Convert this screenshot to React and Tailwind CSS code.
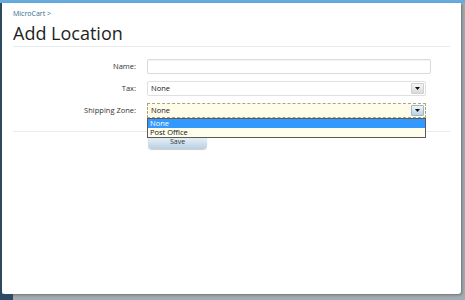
const font = { fontFamily: '"Open Sans", "Noto Sans", sans-serif' };

function Arrow({ active }) {
  return (
    <span
      className={`flex h-[11px] w-[13px] items-center justify-center rounded-[1px] border ${
        active
          ? "border-[#9fb6c8] bg-gradient-to-b from-[#eef5fb] to-[#bcd2e4]"
          : "border-[#cfcfcf] bg-gradient-to-b from-[#f6f6f6] to-[#dadada]"
      }`}
    >
      <svg width="5" height="3" viewBox="0 0 5 3">
        <path d="M0 0h5L2.5 3z" fill="#111" />
      </svg>
    </span>
  );
}

function Row({ label, children }) {
  return (
    <div className="mb-[7px] flex h-[15px] items-center">
      <label className="w-[124px] pr-[1px] text-right text-[7.5px] text-[#333]">
        {label}
      </label>
      <div className="relative ml-[10px]">{children}</div>
    </div>
  );
}

export default function App() {
  return (
    <div
      className="flex h-[300px] w-[465px] flex-col overflow-hidden bg-[#a2acb1]"
      style={font}
    >
      <div className="h-[3px] bg-[#68ade0]" />
      <div className="flex flex-1">
        <div className="w-[2px] bg-[#2d4b62]" />
        <div className="flex-1 rounded-b-[3px] bg-white px-[11px] shadow-[1px_1px_3px_rgba(0,0,0,0.35)]">
          <div className="pt-[6px] text-[7px] leading-[9px] text-[#2f6a8d]">
            MicroCart &gt;
          </div>
          <h1 className="mt-[4px] border-b border-[#e7ecef] pb-[2px] text-[18px] leading-[22px] text-[#1e1e1e]">
            Add Location
          </h1>

          <div className="mt-[12px]">
            <Row label="Name:">
              <div className="h-[15px] w-[284px] rounded-[2px] border border-[#dadada] bg-white shadow-[inset_0_1px_1px_rgba(0,0,0,0.04)]" />
            </Row>
            <Row label="Tax:">
              <div className="flex h-[15px] w-[279px] items-center justify-between rounded-[2px] border border-[#e0e0e0] bg-white pl-[3px] pr-[1px]">
                <span className="text-[7.5px] text-[#222]">None</span>
                <Arrow />
              </div>
            </Row>
            <Row label="Shipping Zone:">
              <div className="flex h-[15px] w-[279px] items-center justify-between border border-dashed border-[#a9a77f] bg-[#fffce9] pl-[3px] pr-[1px]">
                <span className="text-[7.5px] text-[#222]">None</span>
                <Arrow active />
              </div>
              <div className="absolute left-0 top-[15px] z-10 w-[279px] border border-[#5a5a5a] bg-[#fffdec] text-[7.5px] leading-[9px]">
                <div className="bg-[#3399ff] pl-[2px] text-white">None</div>
                <div className="pl-[2px] text-[#111]">Post Office</div>
              </div>
            </Row>
          </div>

          <div className="mt-[13px] border-t border-[#e7ecef]" />
          <div className="ml-[135px] mt-[4px] flex h-[13px] w-[59px] items-center justify-center rounded-b-[4px] rounded-t-[1px] bg-gradient-to-b from-[#eef5fb] to-[#b9cfe1] text-[7px] text-[#333] shadow-[0_1px_1px_rgba(0,0,0,0.2)]">
            Save
          </div>
        </div>
        <div className="w-[4px]" />
      </div>
      <div className="flex h-[6px]">
        <div className="w-[13px] bg-[#2d4b62]" />
      </div>
    </div>
  );
}
